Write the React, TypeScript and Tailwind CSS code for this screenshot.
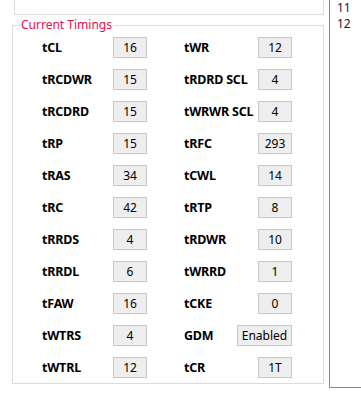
import React from "react";

const left: [string, string][] = [
  ["tCL", "16"],
  ["tRCDWR", "15"],
  ["tRCDRD", "15"],
  ["tRP", "15"],
  ["tRAS", "34"],
  ["tRC", "42"],
  ["tRRDS", "4"],
  ["tRRDL", "6"],
  ["tFAW", "16"],
  ["tWTRS", "4"],
  ["tWTRL", "12"],
];
const right: [string, string][] = [
  ["tWR", "12"],
  ["tRDRD SCL", "4"],
  ["tWRWR SCL", "4"],
  ["tRFC", "293"],
  ["tCWL", "14"],
  ["tRTP", "8"],
  ["tRDWR", "10"],
  ["tWRRD", "1"],
  ["tCKE", "0"],
  ["GDM", "Enabled"],
  ["tCR", "1T"],
];

function Cell({ label, value }: { label: string; value: string }) {
  const wide = value === "Enabled";
  return (
    <div className="flex h-[21px] items-center justify-between">
      <span className="pt-[2px] text-[12.5px] font-bold leading-none tracking-[-0.2px] text-black">{label}</span>
      <span
        className={`flex h-[21px] items-center justify-center border border-[#c8c8c8] bg-[#eeeeee] text-[12px] leading-none text-black ${
          wide ? "w-[55px]" : "w-[34px]"
        }`}
      >
        {value}
      </span>
    </div>
  );
}

export default function App() {
  const rows = left.map((l, i) => [l, right[i]] as const);
  return (
    <div
      className="flex h-[401px] w-[361px] overflow-hidden bg-white"
      style={{ fontFamily: '"Noto Sans", "Open Sans", sans-serif' }}
    >
      <div className="w-[329px] shrink-0">
        <div className="ml-[14px] h-[15px] w-[310px] border-x border-b border-[#dcdcdc]" />
        <div className="relative ml-[12px] mt-[10px] h-[359px] w-[312px] border border-[#dcdcdc]">
          <span className="absolute left-[7px] top-[-9px] bg-white px-[1px] text-[12px] leading-[16px] text-[#e3104f]">
            Current Timings
          </span>
          <div className="grid grid-cols-[105px_108px] gap-x-[37px] gap-y-[11px] pl-[29px] pt-[11px]">
            {rows.map(([l, r]) => (
              <React.Fragment key={l[0]}>
                <Cell label={l[0]} value={l[1]} />
                <Cell label={r[0]} value={r[1]} />
              </React.Fragment>
            ))}
          </div>
        </div>
      </div>
      <div className="h-[388px] flex-1 border-b border-l border-[#828790] pl-[7px] text-[12px] leading-[16px] text-[#2a1040]">
        <div>11</div>
        <div>12</div>
      </div>
    </div>
  );
}
